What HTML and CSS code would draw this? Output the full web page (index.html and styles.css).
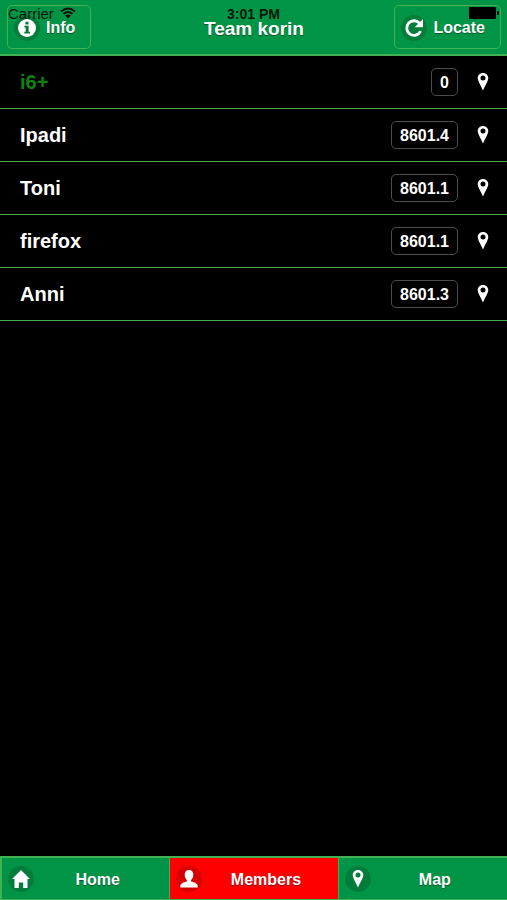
FILE: index.html
```
<!DOCTYPE html>
<html lang="en">
<head>
<meta charset="utf-8">
<meta name="viewport" content="width=device-width, initial-scale=1">
<title>Team korin</title>
<link rel="stylesheet" href="styles.css">
</head>
<body>
<svg class="defs" aria-hidden="true">
  <symbol id="pin" viewBox="0 0 14 18">
    <path fill-rule="evenodd" d="M7 0C4 0 1.700 2.200 1.700 5C1.700 7.600 4.500 12 7 17.500C9.500 12 12.300 7.600 12.300 5C12.300 2.200 10 0 7 0ZM7 2.500A2.500 2.500 0 1 1 7 7.500A2.500 2.500 0 1 1 7 2.500Z"/>
  </symbol>
</svg>
<div class="status">
  <span class="carrier">Carrier
    <svg class="wifi" viewBox="0 0 16 12" aria-hidden="true"><path d="M1 4.500Q8-1.500 15 4.500M3.500 7Q8 3.200 12.500 7" fill="none" stroke="#001a0a" stroke-width="1.900"/><path d="M5.300 8.600Q8 6.600 10.700 8.600L8 11.500Z"/></svg>
  </span>
  <span class="time">3:01 PM</span>
  <svg class="battery" viewBox="0 0 30 12" aria-hidden="true"><rect width="27" height="12" rx="1"/><rect x="28" y="4" width="2" height="4" rx="1"/></svg>
</div>
<header class="header">
  <button class="btn" type="button">
    <span class="disc"><svg viewBox="0 0 24 24" aria-hidden="true"><circle cx="12" cy="12" r="9" fill="#fff"/><path fill="#087a38" d="M10.500 5.800h3v2.600h-3zM9.300 9.800h4.300v6h1.400v1.700H9.300v-1.700h1.400v-4.300H9.300z"/></svg></span>
    Info
  </button>
  <h1>Team korin</h1>
  <button class="btn" type="button">
    <span class="disc"><svg viewBox="0 0 24 24" aria-hidden="true"><path d="M17.500 7.200A7.300 7.300 0 1 0 18.600 15.200" fill="none" stroke="#fff" stroke-width="2.800"/><path fill="#fff" d="M21 3v8.300h-8.300z"/></svg></span>
    Locate
  </button>
</header>
<main>
  <ul class="list">
    <li><span class="name me">i6+</span><span class="badge">0</span><svg class="pin" aria-hidden="true"><use href="#pin"/></svg></li>
    <li><span class="name">Ipadi</span><span class="badge">8601.4</span><svg class="pin" aria-hidden="true"><use href="#pin"/></svg></li>
    <li><span class="name">Toni</span><span class="badge">8601.1</span><svg class="pin" aria-hidden="true"><use href="#pin"/></svg></li>
    <li><span class="name">firefox</span><span class="badge">8601.1</span><svg class="pin" aria-hidden="true"><use href="#pin"/></svg></li>
    <li><span class="name">Anni</span><span class="badge">8601.3</span><svg class="pin" aria-hidden="true"><use href="#pin"/></svg></li>
  </ul>
</main>
<nav class="tabs">
  <a href="#home"><span class="disc"><svg viewBox="0 0 24 24" aria-hidden="true"><path fill="#fff" d="M12 3l9 9h-2.500v9h-4.300v-5.500H9.800V21H5.500v-9H3z"/></svg></span><span class="label">Home</span></a>
  <a href="#members" class="active" aria-current="page"><span class="disc"><svg viewBox="0 0 24 24" aria-hidden="true"><path fill="#fff" d="M12 3c2.800 0 4.300 2 4.300 4.700 0 2.300-.9 4.200-2.200 5.300v1.500c3 .9 6.600 1.800 6.600 4.500v1.500H3.300V19c0-2.700 3.600-3.600 6.600-4.500V13c-1.300-1.100-2.200-3-2.200-5.300C7.700 5 9.200 3 12 3z"/></svg></span><span class="label">Members</span></a>
  <a href="#map"><span class="disc"><svg class="pin" aria-hidden="true"><use href="#pin"/></svg></span><span class="label">Map</span></a>
</nav>
</body>
</html>
```
FILE: styles.css
```
* {
  box-sizing: border-box;
}

body {
  margin: 0;
  min-height: 100vh;
  display: flex;
  flex-direction: column;
  background: #000;
  color: #fff;
  font: bold 16px/20px "Liberation Sans", Arial, sans-serif;
}

.defs {
  position: absolute;
  width: 0;
  height: 0;
}

/* The status bar lies over the header. */
.status {
  position: absolute;
  top: 4px;
  left: 8px;
  right: 8px;
  height: 20px;
  display: grid;
  grid-template-columns: 1fr auto 1fr;
  color: #001a0a;
  pointer-events: none;
}

.carrier {
  display: flex;
  gap: 6px;
  font-size: 15px;
  font-weight: normal;
}

.wifi {
  width: 16px;
  height: 12px;
  margin-top: 3px;
}

.time {
  font-size: 14px;
}

.battery {
  width: 30px;
  height: 12px;
  margin-top: 3px;
  justify-self: end;
}

.header {
  display: grid;
  grid-template-columns: 1fr auto 1fr;
  align-items: center;
  height: 56px;
  padding: 0 6px 0 7px;
  background: #009546;
  border-bottom: 2px solid #40b254;
  text-shadow: 0 1px 1px #00542a;
}

.header h1 {
  margin: 0;
  padding-top: 3px;
  font-size: 19px;
  line-height: 24px;
}

.btn {
  display: flex;
  align-items: center;
  justify-self: start;
  gap: 6px;
  height: 44px;
  padding: 2px 15px 0 6px;
  border: 1px solid #40b254;
  border-radius: 5px;
  background: none;
  color: inherit;
  font: inherit;
  text-shadow: inherit;
}

.btn:last-child {
  justify-self: end;
}

.disc {
  display: flex;
  align-items: center;
  justify-content: center;
  width: 26px;
  height: 26px;
  border-radius: 50%;
  background: rgba(0, 0, 0, 0.16);
}

.disc svg {
  width: 24px;
  height: 24px;
}

main {
  flex: 1;
}

.list {
  margin: 0;
  padding: 0;
  list-style: none;
}

.list li {
  display: flex;
  align-items: center;
  height: 53px;
  padding: 0 17px 0 20px;
  border-bottom: 1px solid #45a84d;
}

.name {
  flex: 1;
  font-size: 20px;
}

.me {
  color: #0c830c;
}

.badge {
  margin-right: 18px;
  padding: 4px 8px 2px;
  border: 1px solid #4c4c4c;
  border-radius: 5px;
}

.pin,
.disc .pin {
  width: 14px;
  height: 18px;
  fill: #fff;
}

.tabs {
  display: grid;
  grid-template-columns: repeat(3, 1fr);
  height: 44px;
  border-left: 2px solid #40b254;
}

.tabs a {
  display: flex;
  align-items: center;
  padding-left: 6px;
  border: solid #40b254;
  border-width: 2px 1px 1px 0;
  background: #009546;
  color: inherit;
  text-decoration: none;
  text-shadow: 0 1px 1px #00542a;
}

.tabs a:last-child {
  border-right: 0;
}

.tabs .active {
  background: #f00;
  text-shadow: 0 1px 1px #800000;
}

.label {
  flex: 1;
  padding: 2px 8px 0 0;
  text-align: center;
}
```
